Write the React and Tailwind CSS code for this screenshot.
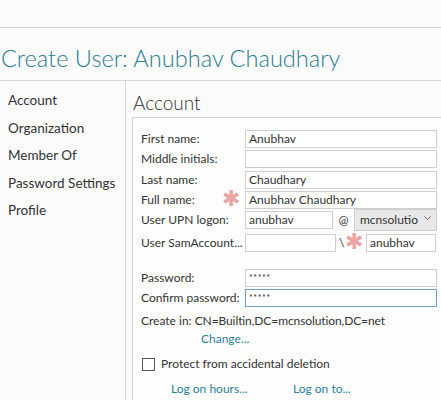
import React from 'react';

const Field = ({ label, value, star, top }) => (
    <div className="flex items-center h-[18px]" style={{ marginTop: top }}>
        <span className="w-[104px] shrink-0 relative whitespace-nowrap">
            {label}
            {star && <span className="absolute left-[81px] top-[-4px] text-[22px] leading-none text-[#eba3a3]">✱</span>}
        </span>
        <div className="w-[192px] h-[18px] border border-[#cfcfcf] bg-white px-[3px] leading-[16px]">{value}</div>
    </div>
);

const App = () => {
    const sideItems = ['Account', 'Organization', 'Member Of', 'Password Settings', 'Profile'];

    return (
        <div className="w-[441px] h-[400px] overflow-hidden bg-[#fbfbfb] text-[#333] font-['Lato',sans-serif]">
            {/* top strip */}
            <div className="h-[28px] border-b border-[#d6d6d6]"></div>

            {/* title */}
            <div className="h-[53px] border-b border-[#d6d6d6] pl-[1px] pt-[14px]">
                <h1 className="text-[23.6px] font-light leading-[32px] text-[#2b7b92] whitespace-nowrap">Create User: Anubhav Chaudhary</h1>
            </div>

            <div className="flex">
                {/* sidebar */}
                <div className="w-[126px] shrink-0 border-r border-[#d6d6d6] h-[330px] pt-[6px] pl-[8px] text-[13.5px]">
                    {sideItems.map((s) => (
                        <div key={s} className="h-[27.5px] leading-[27.5px]">{s}</div>
                    ))}
                </div>

                {/* main */}
                <div className="pl-[6px] pt-[10px]">
                    <h2 className="text-[19px] font-light leading-[24px] pl-[1px] text-[#333]">Account</h2>
                    <div className="mt-[2px] w-[330px] h-[300px] border border-[#d2d2d2] bg-[#fdfdfd] pl-[8px] pt-[12px] text-[12px]">
                        <Field label="First name:" value="Anubhav" top={0} />
                        <Field label="Middle initials:" value="" top={2} />
                        <Field label="Last name:" value="Chaudhary" top={3} />
                        <Field label="Full name:" value="Anubhav Chaudhary" star top={2} />

                        {/* UPN */}
                        <div className="flex items-center h-[22px] mt-[0px]">
                            <span className="w-[104px] shrink-0">User UPN logon:</span>
                            <div className="w-[88px] h-[18px] border border-[#cfcfcf] bg-white px-[3px] leading-[16px]">anubhav</div>
                            <span className="w-[21px] text-center">@</span>
                            <div className="w-[83px] h-[22px] border border-[#cfcfcf] bg-[#e8e8e8] pl-[5px] pr-[5px] flex items-center justify-between">
                                <span className="overflow-hidden whitespace-nowrap w-[58px]">mcnsolution</span>
                                <svg width="7" height="5" viewBox="0 0 7 5" className="mb-[4px]">
                                    <path d="M0.5 0.5 L3.5 3.5 L6.5 0.5" fill="none" stroke="#666" strokeWidth="1" />
                                </svg>
                            </div>
                        </div>

                        {/* SamAccount */}
                        <div className="flex items-center h-[18px] mt-[3px]">
                            <span className="w-[104px] shrink-0 whitespace-nowrap">User SamAccount...</span>
                            <div className="w-[91px] h-[18px] border border-[#cfcfcf] bg-white"></div>
                            <span className="ml-[3px] w-[6px]">\</span>
                            <span className="text-[22px] leading-none text-[#eba3a3] w-[21px] -mt-[4px]">✱</span>
                            <div className="w-[70px] h-[18px] border border-[#cfcfcf] bg-white px-[3px] leading-[16px]">anubhav</div>
                        </div>

                        <Field label="Password:" value={<span className="text-[9px] tracking-[0.5px] align-top">*****</span>} top={17} />
                        <div className="flex items-center h-[18px] mt-[2px]">
                            <span className="w-[104px] shrink-0 whitespace-nowrap">Confirm password:</span>
                            <div className="w-[192px] h-[18px] border border-[#6b9fd1] bg-white px-[3px] leading-[16px]">
                                <span className="text-[9px] tracking-[0.5px] align-top">*****</span>
                            </div>
                        </div>

                        <div className="mt-[5px] h-[18px] leading-[18px] whitespace-nowrap">
                            Create in:&nbsp;<span className="tracking-[-0.1px]">CN=Builtin,DC=mcnsolution,DC=net</span>
                        </div>
                        <div className="h-[18px] leading-[18px] pl-[60px] text-[#2f7d9a]">Change...</div>

                        <div className="flex items-center mt-[8px] h-[16px]">
                            <div className="w-[13px] h-[13px] border border-[#555] bg-white ml-[1px]"></div>
                            <span className="ml-[6px]">Protect from accidental deletion</span>
                        </div>

                        <div className="flex mt-[8px] h-[18px] leading-[18px] text-[#2f7d9a] pl-[30px]">
                            <span className="w-[122px]">Log on hours...</span>
                            <span>Log on to...</span>
                        </div>
                    </div>
                </div>
            </div>
        </div>
    );
};

export default App;
